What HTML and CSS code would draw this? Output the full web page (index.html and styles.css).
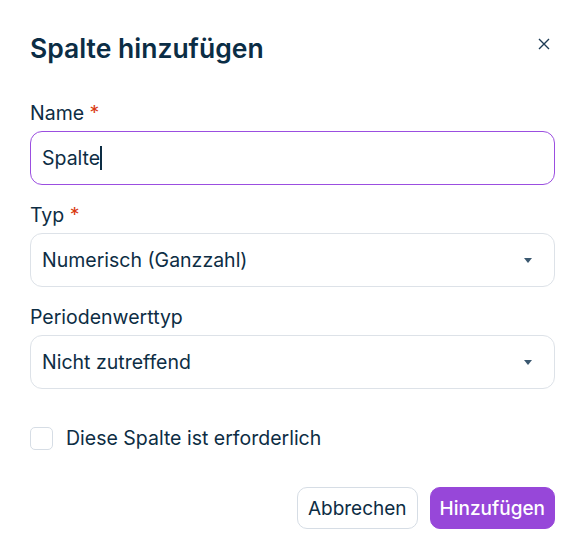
FILE: index.html
```html
<!DOCTYPE html>
<html lang="de">
<head>
<meta charset="utf-8">
<link rel="stylesheet" href="styles.css">
</head>
<body>
<div class="dialog">
  <div class="header">
    <h1 class="title">Spalte hinzufügen</h1>
    <button class="close" aria-label="Schließen">
      <svg width="12" height="12" viewBox="0 0 12 12"><path d="M1 1 L11 11 M11 1 L1 11" stroke="#1d3b55" stroke-width="1.4" fill="none"/></svg>
    </button>
  </div>
  <div class="field">
    <label class="label">Name <span class="req">*</span></label>
    <div class="input focused"><span class="value">Spalte</span><span class="caret"></span></div>
  </div>
  <div class="field">
    <label class="label">Typ <span class="req">*</span></label>
    <div class="input select"><span class="value">Numerisch (Ganzzahl)</span><span class="arrow"></span></div>
  </div>
  <div class="field">
    <label class="label">Periodenwerttyp</label>
    <div class="input select"><span class="value">Nicht zutreffend</span><span class="arrow"></span></div>
  </div>
  <label class="check"><span class="box"></span><span>Diese Spalte ist erforderlich</span></label>
  <div class="actions">
    <button class="btn secondary">Abbrechen</button>
    <button class="btn primary">Hinzufügen</button>
  </div>
</div>
</body>
</html>
```

FILE: styles.css
```css
* { box-sizing: border-box; }
html, body { margin: 0; padding: 0; background: #fff; }
body {
  font-family: Inter, "Noto Sans", sans-serif;
  color: #0d2d44;
}
.dialog {
  width: 582px;
  padding: 32px 27px 0 30px;
}
.header {
  display: flex;
  justify-content: space-between;
  align-items: flex-start;
  margin-bottom: 37px;
}
.title {
  margin: 0;
  font-size: 26.5px;
  font-weight: 600;
  line-height: 32px;
  color: #0b2d45;
}
.close {
  border: 0;
  background: none;
  padding: 0;
  width: 12px;
  height: 12px;
  margin: 6px 5px 0 0;
  display: flex;
}
.field { margin-bottom: 18px; }
.label {
  display: block;
  font-size: 19.5px;
  line-height: 24px;
  margin-bottom: 6px;
  color: #0d2d44;
}
.req { color: #d93a12; }
.input {
  height: 54px;
  border: 1px solid #dde2e8;
  border-radius: 12px;
  display: flex;
  align-items: center;
  padding: 0 22px 0 11px;
  font-size: 19.5px;
}
.input.focused { border-color: #9b4ee0; }
.select { justify-content: space-between; }
.caret {
  display: inline-block;
  width: 2px;
  height: 24px;
  background: #0d2d44;
}
.arrow {
  width: 0;
  height: 0;
  border-left: 4px solid transparent;
  border-right: 4px solid transparent;
  border-top: 5px solid #3b5870;
}
.check {
  display: flex;
  align-items: center;
  gap: 13px;
  margin-top: 37px;
  font-size: 19.5px;
  line-height: 24px;
}
.box {
  width: 23px;
  height: 23px;
  border: 1px solid #d6dde5;
  border-radius: 5px;
}
.actions {
  display: flex;
  justify-content: flex-end;
  gap: 12px;
  margin-top: 37px;
}
.btn {
  font-family: Inter, "Noto Sans", sans-serif;
  font-size: 19px;
  height: 42px;
  border-radius: 10px;
  padding: 0 10px;
}
.secondary {
  background: #fff;
  border: 1px solid #d6dde5;
  color: #0d2d44;
}
.primary {
  background: #9747d9;
  border: 1px solid #9747d9;
  color: #fff;
  font-weight: 500;
  padding: 0 9px;
}
```
